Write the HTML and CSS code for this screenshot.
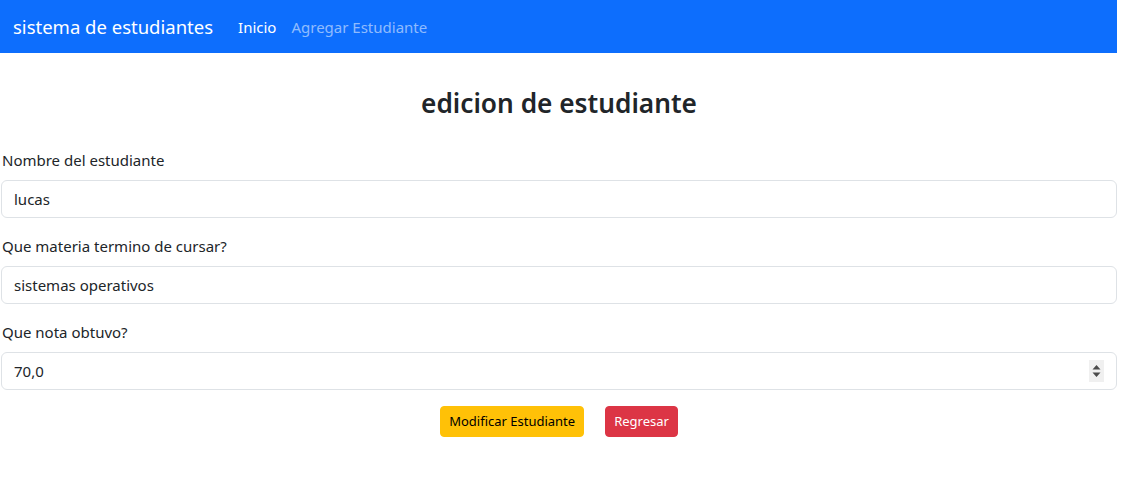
FILE: index.html
```html
<!DOCTYPE html>
<html lang="es">
<head>
<meta charset="utf-8">
<title>edicion de estudiante</title>
<link rel="stylesheet" href="styles.css">
</head>
<body>
<div class="page">
  <nav class="navbar">
    <a class="brand" href="#">sistema de estudiantes</a>
    <ul class="nav-links">
      <li><a class="nav-link active" href="#">Inicio</a></li>
      <li><a class="nav-link" href="#">Agregar Estudiante</a></li>
    </ul>
  </nav>
  <main class="content">
    <h3 class="title">edicion de estudiante</h3>
    <form class="form">
      <div class="field">
        <label class="form-label">Nombre del estudiante</label>
        <input class="form-control" type="text" value="lucas">
      </div>
      <div class="field">
        <label class="form-label">Que materia termino de cursar?</label>
        <input class="form-control" type="text" value="sistemas operativos">
      </div>
      <div class="field">
        <label class="form-label">Que nota obtuvo?</label>
        <div class="number-wrap">
          <input class="form-control" type="text" value="70,0">
          <span class="spinner">
            <svg width="15" height="22" viewBox="0 0 15 22"><path d="M3.5 9.5 L7.5 5 L11.5 9.5 Z M3.5 12.5 L7.5 17 L11.5 12.5 Z" fill="#4b4b4b"/></svg>
          </span>
        </div>
      </div>
      <div class="actions">
        <button type="button" class="btn btn-warning">Modificar Estudiante</button>
        <button type="button" class="btn btn-danger">Regresar</button>
      </div>
    </form>
  </main>
</div>
</body>
</html>
```
FILE: styles.css
```css
* { box-sizing: border-box; }
html, body { margin: 0; padding: 0; background: #fff; }
body {
  font-family: "Noto Sans", Lato, "Liberation Sans", sans-serif;
  font-size: 15px;
  line-height: 24px;
  color: #212529;
}
.page { width: 1117px; }
.navbar {
  display: flex;
  align-items: center;
  height: 53px;
  padding: 0 12px 0 13px;
  background: #0d6efd;
}
.brand {
  color: #fff;
  font-size: 18.5px;
  line-height: 30px;
  text-decoration: none;
  margin-right: 17px;
}
.nav-links { display: flex; list-style: none; margin: 0; padding: 0; }
.nav-link {
  display: block;
  padding: 0 8px;
  color: rgba(255,255,255,.55);
  text-decoration: none;
}
.nav-link.active { color: #fff; }
.nav-links li + li .nav-link { padding-left: 7px; }
.content { padding: 0 0 0 1px; }
.title {
  margin: 33px 0 28px;
  text-align: center;
  font-size: 26.25px;
  font-weight: 600;
  line-height: 34px;
}
.field { margin-bottom: 16px; }
.form-label { display: block; margin: 0 0 8px 1px; }
.form-control {
  display: block;
  width: 100%;
  height: 38px;
  padding: 6px 12px;
  font: inherit;
  color: #212529;
  background: #fff;
  border: 1px solid #dee2e6;
  border-radius: 6px;
  outline: none;
}
.number-wrap { position: relative; }
.spinner {
  position: absolute;
  right: 13px;
  top: 8px;
  width: 15px;
  height: 22px;
  background: #f0f0f0;
  display: flex;
}
.actions { display: flex; justify-content: center; gap: 21px; }
.btn {
  font: inherit;
  font-size: 13px;
  line-height: 21px;
  padding: 4px 8px;
  border: 1px solid transparent;
  border-radius: 4px;
  cursor: pointer;
}
.btn-warning { background: #ffc107; border-color: #ffc107; color: #000; }
.btn-danger { background: #dc3545; border-color: #dc3545; color: #fff; }
```
